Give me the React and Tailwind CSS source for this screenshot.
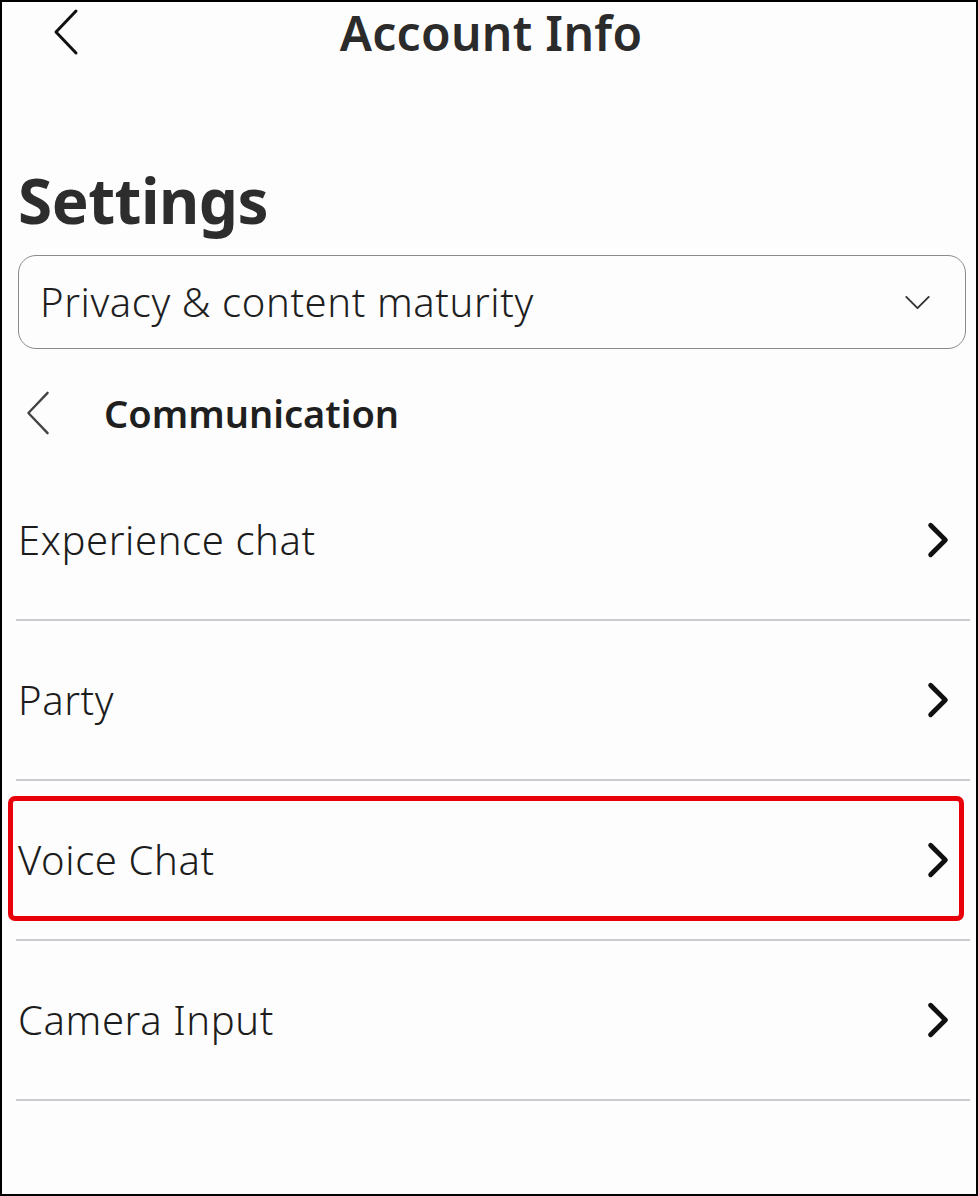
import React from "react";

const Chevron = ({ className = "" }) => (
  <svg viewBox="0 0 24 36" className={className} fill="none" stroke="currentColor" strokeWidth="4.5" strokeLinecap="round" strokeLinejoin="round">
    <path d="M5 4 L19 18 L5 32" />
  </svg>
);

const Row = ({ label, highlight }) => (
  <div className="relative">
    <div className="h-[158px] flex items-center justify-between pl-[16px] pr-[25px]">
      <span className="text-[40px] font-light text-[#1c1c1c] tracking-[0.6px]">{label}</span>
      <Chevron className="w-[26px] h-[38px] text-[#111]" />
    </div>
    {highlight && (
      <div className="absolute left-[6px] right-[12px] top-[15px] h-[125px] border-[5px] border-[#e8000b] rounded-[7px]" />
    )}
    <div className="ml-[14px] mr-[6px] h-[2px] bg-[#c9cbce]" />
  </div>
);

export default function App() {
  return (
    <div
      className="w-[978px] h-[1196px] bg-[#fdfdfd] border-2 border-black overflow-hidden"
      style={{ fontFamily: '"Noto Sans", "Open Sans", sans-serif' }}
    >
      <div className="relative h-[60px] flex items-start justify-center pt-[2px]">
        <svg viewBox="0 0 28 48" className="absolute left-[50px] top-[6px] w-[28px] h-[48px]" fill="none" stroke="#111" strokeWidth="3" strokeLinecap="round" strokeLinejoin="round">
          <path d="M24 3 L4 24 L24 45" />
        </svg>
        <h1 className="text-[48px] font-semibold text-[#2b2b2b] leading-[1.2] tracking-[0.3px] ml-[4px]">Account Info</h1>
      </div>

      <div className="pt-[107px] pl-[16px]">
        <h2 className="text-[62px] font-bold text-[#2d2d2d] leading-none tracking-[-0.5px]">Settings</h2>
      </div>

      <div className="mt-[24px] ml-[16px] mr-[10px] h-[94px] rounded-[18px] border border-[#8a8a8a] flex items-center justify-between pl-[21px] pr-[34px]">
        <span className="text-[40px] font-light text-[#1f1f1f] tracking-[0.6px]">Privacy &amp; content maturity</span>
        <svg viewBox="0 0 28 16" className="w-[27px] h-[15px]" fill="none" stroke="#333" strokeWidth="2" strokeLinecap="round" strokeLinejoin="round">
          <path d="M2 2 L14 14 L26 2" />
        </svg>
      </div>

      <div className="h-[112px] flex items-center pl-[22px] pt-[16px]">
        <svg viewBox="0 0 28 48" className="w-[28px] h-[46px]" fill="none" stroke="#444" strokeWidth="2.5" strokeLinecap="round" strokeLinejoin="round">
          <path d="M24 3 L4 24 L24 45" />
        </svg>
        <span className="ml-[52px] text-[38px] font-semibold text-[#1f1f1f]">Communication</span>
      </div>

      <Row label="Experience chat" />
      <Row label="Party" />
      <Row label="Voice Chat" highlight />
      <Row label="Camera Input" />
    </div>
  );
}
